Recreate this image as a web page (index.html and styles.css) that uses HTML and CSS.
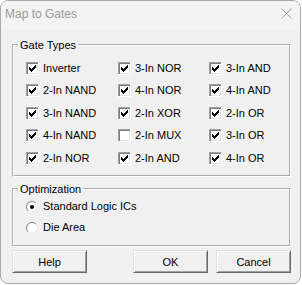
FILE: index.html
```html
<!DOCTYPE html>
<html>
<head>
<meta charset="utf-8">
<title>Map to Gates</title>
<link rel="stylesheet" href="styles.css">
</head>
<body>
<svg class="defs" width="0" height="0" aria-hidden="true">
  <defs>
    <symbol id="cbox" viewBox="0 0 13 13">
      <rect x="0" y="0" width="13" height="13" fill="#ffffff"/>
      <path d="M0 0H13V1H1V13H0Z" fill="#a0a0a0"/>
      <path d="M1 1H12V2H2V12H1Z" fill="#7c7c7c"/>
      <path d="M12 0H13V13H0V12H12Z" fill="#ffffff"/>
      <path d="M11 2H12V12H2V11H11Z" fill="#e3e3e3"/>
    </symbol>
    <symbol id="tick" viewBox="0 0 13 13">
      <path d="M3 5h1v1h1v1h1v-1h1v-1h1v-1h1v-1h1v3h-1v1h-1v1h-1v1h-1v1h-1v-1h-1v-1h-1z" fill="#000"/>
    </symbol>
    <symbol id="radio" viewBox="0 0 12 12">
      <circle cx="6" cy="6" r="5.5" fill="#ffffff"/>
      <path d="M2.11 9.89A5.5 5.5 0 0 1 9.89 2.11" fill="none" stroke="#808080"/>
      <path d="M9.89 2.11A5.5 5.5 0 0 1 2.11 9.89" fill="none" stroke="#e3e3e3"/>
    </symbol>
  </defs>
</svg>

<div class="window">
  <div class="titlebar">
    <span class="title">Map to Gates</span>
    <svg class="close" width="11" height="11" viewBox="0 0 11 11"><path d="M0.5 0.5L10.5 10.5M10.5 0.5L0.5 10.5" stroke="#9a9a9a" stroke-width="1"/></svg>
  </div>
  <div class="client">
    <fieldset class="group gates">
      <legend>Gate Types</legend>
      <div class="grid">
        <label class="cb"><svg class="box"><use href="#cbox"/><use href="#tick"/></svg><span>Inverter</span></label>
        <label class="cb"><svg class="box"><use href="#cbox"/><use href="#tick"/></svg><span>3-In NOR</span></label>
        <label class="cb"><svg class="box"><use href="#cbox"/><use href="#tick"/></svg><span>3-In AND</span></label>
        <label class="cb"><svg class="box"><use href="#cbox"/><use href="#tick"/></svg><span>2-In NAND</span></label>
        <label class="cb"><svg class="box"><use href="#cbox"/><use href="#tick"/></svg><span>4-In NOR</span></label>
        <label class="cb"><svg class="box"><use href="#cbox"/><use href="#tick"/></svg><span>4-In AND</span></label>
        <label class="cb"><svg class="box"><use href="#cbox"/><use href="#tick"/></svg><span>3-In NAND</span></label>
        <label class="cb"><svg class="box"><use href="#cbox"/><use href="#tick"/></svg><span>2-In XOR</span></label>
        <label class="cb"><svg class="box"><use href="#cbox"/><use href="#tick"/></svg><span>2-In OR</span></label>
        <label class="cb"><svg class="box"><use href="#cbox"/><use href="#tick"/></svg><span>4-In NAND</span></label>
        <label class="cb"><svg class="box"><use href="#cbox"/></svg><span>2-In MUX</span></label>
        <label class="cb"><svg class="box"><use href="#cbox"/><use href="#tick"/></svg><span>3-In OR</span></label>
        <label class="cb"><svg class="box"><use href="#cbox"/><use href="#tick"/></svg><span>2-In NOR</span></label>
        <label class="cb"><svg class="box"><use href="#cbox"/><use href="#tick"/></svg><span>2-In AND</span></label>
        <label class="cb"><svg class="box"><use href="#cbox"/><use href="#tick"/></svg><span>4-In OR</span></label>
      </div>
    </fieldset>
    <fieldset class="group opt">
      <legend>Optimization</legend>
      <div class="radios">
        <label class="rb"><svg class="dot" viewBox="0 0 12 12"><use href="#radio"/><circle cx="6" cy="6" r="2" fill="#000"/></svg><span>Standard Logic ICs</span></label>
        <label class="rb"><svg class="dot" viewBox="0 0 12 12"><use href="#radio"/></svg><span>Die Area</span></label>
      </div>
    </fieldset>
    <div class="buttons">
      <button class="btn">Help</button>
      <button class="btn push">OK</button>
      <button class="btn">Cancel</button>
    </div>
  </div>
</div>
</body>
</html>
```
FILE: styles.css
```css
html, body {
  margin: 0;
  padding: 0;
  background: #ffffff;
}
.defs {
  position: absolute;
  width: 0;
  height: 0;
  overflow: hidden;
}
.window {
  box-sizing: border-box;
  width: 301px;
  height: 284px;
  border: 1px solid #a9a9a9;
  border-radius: 8px;
  background: #f0f0f0;
  font-family: "Liberation Sans", Arial, sans-serif;
  font-size: 11px;
  color: #000;
  overflow: hidden;
}
.titlebar {
  height: 29px;
  display: flex;
  justify-content: space-between;
  align-items: flex-start;
  padding: 0 8px 0 4px;
  background: #f3f3f3;
}
.title {
  margin-top: 5px;
  font-size: 12px;
  line-height: 16px;
  color: #999999;
}
.close {
  margin-top: 7px;
  display: block;
}
.client {
  padding: 0 9px 0 11px;
  display: flex;
  flex-direction: column;
}
.group {
  margin: 0;
  min-inline-size: 0;
  border: 2px groove #ffffff;
}
.group legend {
  margin-left: -8px;
  padding: 0 2px;
  line-height: 14px;
}
.gates {
  margin-top: 8px;
  padding: 5px 12px 6px 12px;
}
.grid {
  display: grid;
  grid-template-columns: 92px 91px 1fr;
  grid-template-rows: 22px 23px 22px 23px 22px;
}
.cb {
  display: flex;
  align-items: center;
  gap: 4px;
  line-height: 13px;
}
.box {
  width: 13px;
  height: 13px;
  display: block;
  flex: none;
  shape-rendering: crispEdges;
}
.opt {
  margin-top: 5px;
  padding: 0 12px 7px 12px;
}
.radios {
  display: grid;
  grid-template-rows: 21px 21px;
}
.rb {
  display: flex;
  align-items: center;
  gap: 5px;
  line-height: 13px;
}
.dot {
  width: 12px;
  height: 12px;
  display: block;
  flex: none;
}
.buttons {
  margin-top: 3px;
  display: flex;
}
.btn {
  box-sizing: border-box;
  width: 75px;
  height: 23px;
  padding: 0;
  margin: 0;
  font-family: "Liberation Sans", Arial, sans-serif;
  font-size: 11px;
  color: #000;
  background: #f0f0f0;
  border: 1px solid;
  border-color: #e3e3e3 #696969 #696969 #e3e3e3;
  box-shadow: inset 1px 1px #ffffff, inset -1px -1px #a0a0a0;
}
.push {
  margin-left: auto;
  margin-right: 8px;
}
```
